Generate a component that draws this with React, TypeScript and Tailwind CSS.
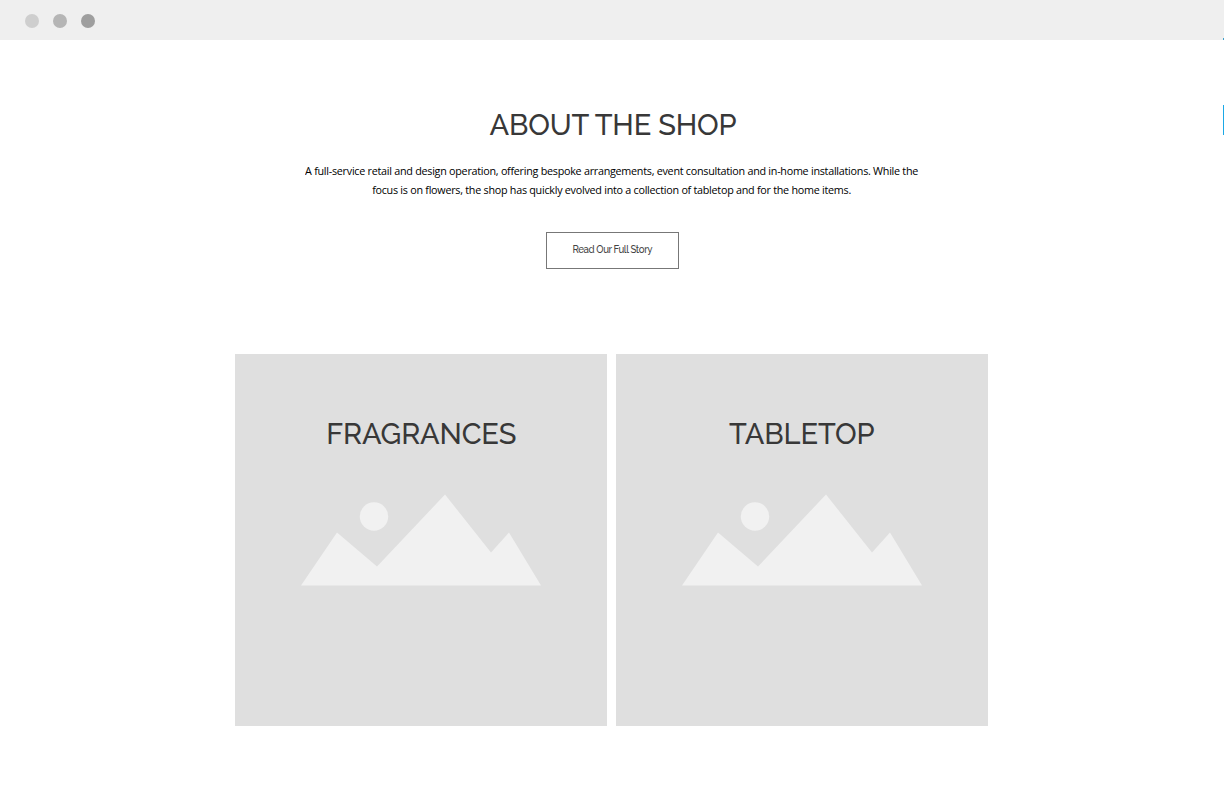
const dots = ["bg-[#cecece]", "bg-[#b5b5b5]", "bg-[#9e9e9e]"];

const BrowserBar = () => (
  <header className="flex h-10 items-center gap-[14px] bg-[#efefef] pt-px pl-[25px]">
    {dots.map((color) => (
      <span key={color} className={`h-[14px] w-[14px] rounded-full ${color}`} />
    ))}
  </header>
);

const Mountains = () => (
  <svg width="240" height="92" viewBox="0 0 240 92" fill="#f1f1f1" aria-hidden="true">
    <circle cx="73" cy="22.5" r="14.2" />
    <path d="M0 91.5 36 38.5 76 72.5 144 0.5 190 58.5 208 38.5 240 91.5Z" />
  </svg>
);

type CategoryCardProps = {
  title: string;
  titleClass: string;
};

const CategoryCard = ({ title, titleClass }: CategoryCardProps) => (
  <a className="flex h-[372px] w-[372px] flex-col items-center bg-[#dfdfdf] pt-[62px]">
    <h2 className={`text-[29px] leading-9 font-medium whitespace-nowrap text-[#383838] ${titleClass}`}>{title}</h2>
    <div className="mt-[42px]">
      <Mountains />
    </div>
  </a>
);

const App = () => {
  return (
    <div className="relative h-[792px] w-[1224px] overflow-hidden bg-white font-['Raleway','Lato',sans-serif]">
      <BrowserBar />

      <main className="flex flex-col items-center">
        {/* About */}
        <section className="flex flex-col items-center pt-[67px]">
          <h1 className="ml-[2px] text-[29px] leading-9 font-medium tracking-[-0.15px] whitespace-nowrap text-[#383838]">
            ABOUT THE SHOP
          </h1>
          <p className="mt-[18px] -ml-px scale-x-[0.93] text-center font-['Open_Sans',sans-serif] text-[11.6px] leading-[19px] tracking-[-0.288px] whitespace-nowrap text-black">
            A full-service retail and design operation, offering bespoke arrangements, event consultation and in-home installations. While the
            <br />
            focus is on flowers, the shop has quickly evolved into a collection of tabletop and for the home items.
          </p>
          <button className="mt-[33px] ml-px h-[37px] w-[133px] border border-[#777777] pb-px text-[10.5px] whitespace-nowrap text-[#444444]">
            <span className="inline-block scale-x-[0.92] font-medium tracking-[-0.42px]">Read Our Full Story</span>
          </button>
        </section>

        {/* Categories */}
        <section className="mt-[85px] -ml-px flex gap-[8.5px]">
          <CategoryCard title="FRAGRANCES" titleClass="tracking-[-0.15px]" />
          <CategoryCard title="TABLETOP" titleClass="tracking-[-0.1px]" />
        </section>
      </main>

      {/* Edge of the side widget */}
      <span className="absolute top-[38px] right-0 h-[2px] w-px bg-[#3f9fc9]" />
      <span className="absolute top-[105px] right-0 h-[30px] w-px bg-[#1ba8e6]" />
    </div>
  );
};

export default App;
